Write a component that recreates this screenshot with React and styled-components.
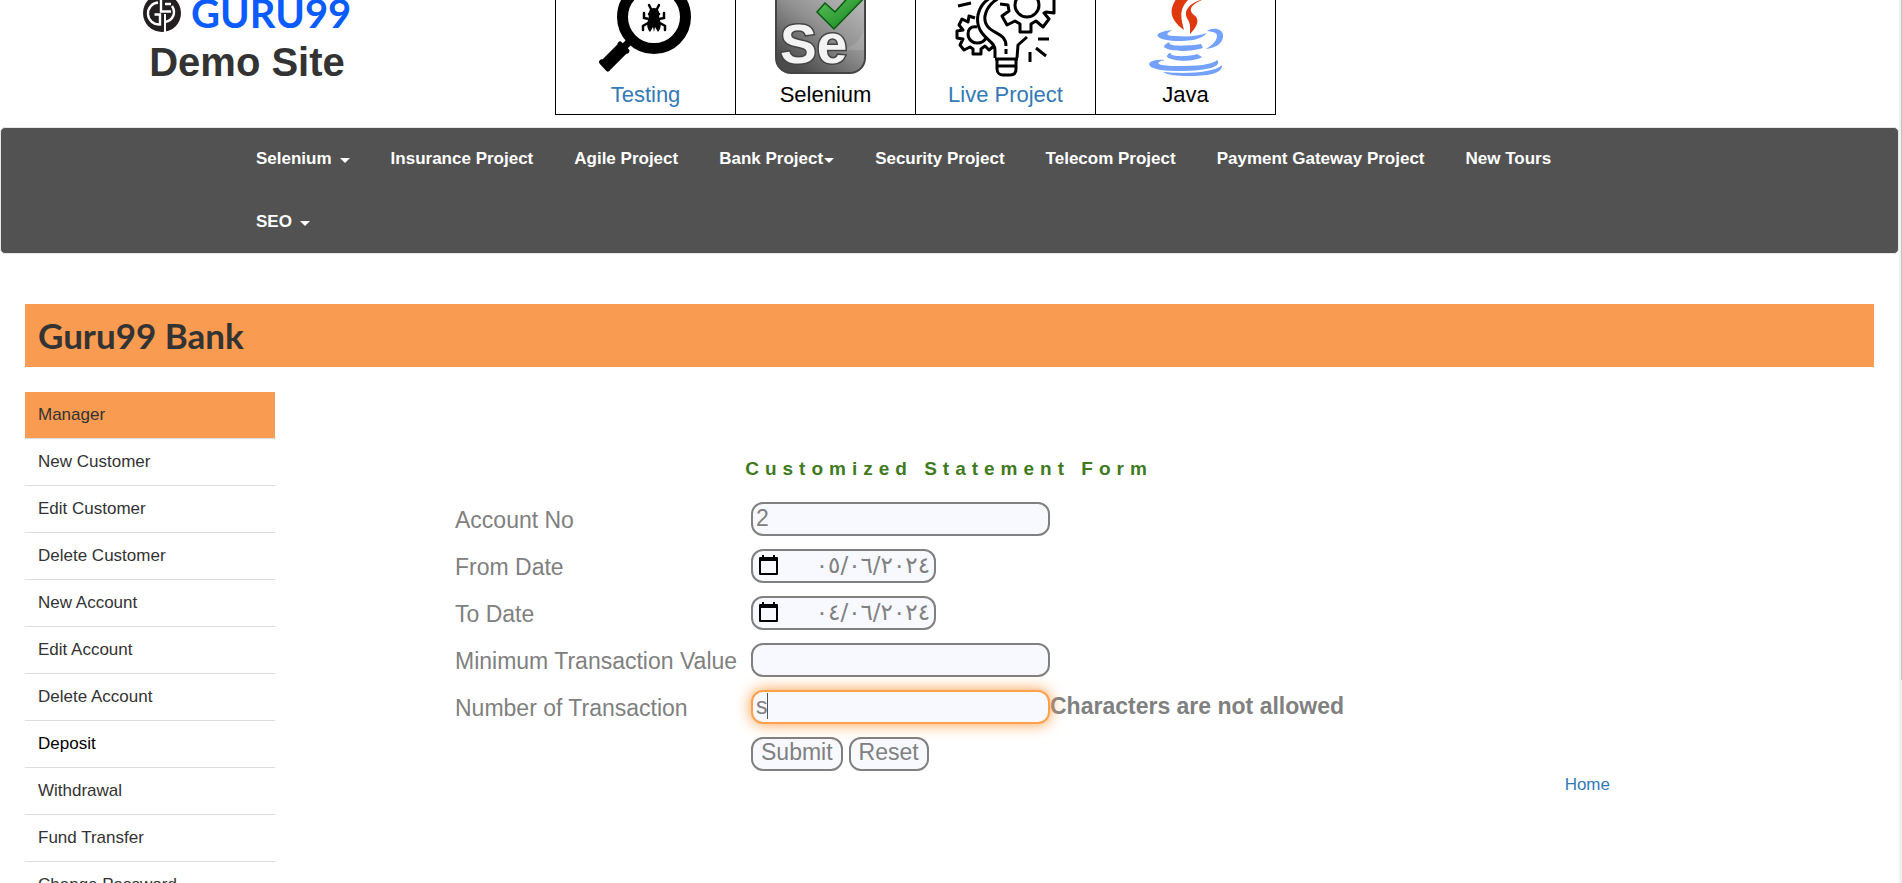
import React from "react";
import styled, { createGlobalStyle } from "styled-components";

const GlobalStyle = createGlobalStyle`
  * { box-sizing: border-box; }
  body {
    margin: 0;
    background: #fff;
    color: #333;
    font-family: "Liberation Sans", Arial, sans-serif;
    font-size: 17px;
    line-height: 24px;
  }
`;

const Window = styled.div`
  display: flex;
  height: 100vh;
  overflow: hidden;
`;

const Page = styled.div`
  flex: 1;
  min-width: 0;
  overflow: hidden;
`;

const ScrollTrack = styled.div`
  display: flex;
  justify-content: flex-end;
  flex: none;
  width: 3px;
  background: #f1f1f1;
`;

const ScrollThumb = styled.div`
  width: 1px;
  height: 77%;
  background: #c1c1c1;
`;

const Header = styled.header`
  display: flex;
  align-items: flex-start;
  height: 127px;
`;

const Brand = styled.div`
  flex: none;
  width: 415px;
  margin-left: 140px;
`;

const BrandLogo = styled.svg`
  display: block;
`;

const SiteTitle = styled.h1`
  margin: 0;
  width: 214px;
  color: #333;
  font-size: 40px;
  line-height: 54px;
  text-align: center;
`;

const Topics = styled.div`
  display: flex;
  border: solid #000;
  border-width: 0 0 1px 1px;
`;

const Topic = styled.div`
  width: 180px;
  padding-bottom: 2px;
  border-right: 1px solid #000;
  color: #000;
  font-size: 22px;
  line-height: 34px;
  text-align: center;
`;

const TopicArt = styled.svg`
  display: block;
  width: 179px;
  height: 78px;
`;

const Link = styled.a`
  color: #337ab7;
  text-decoration: none;
`;

const NavBar = styled.nav`
  border: 1px solid #e7e7e7;
  border-radius: 5px;
  background: #525252;
`;

const NavList = styled.ul`
  display: flex;
  flex-wrap: wrap;
  gap: 1px 41px;
  max-width: 1387px;
  margin: 0 auto;
  padding: 0;
  list-style: none;
`;

const NavLink = styled.a`
  display: flex;
  align-items: center;
  gap: ${(p) => (p.$tight ? "1px" : "8px")};
  height: 62px;
  color: #fff;
  font-weight: bold;
  text-decoration: none;
`;

const Caret = styled.span`
  border: solid transparent;
  border-width: 5px 5px 0;
  border-top-color: #fff;
  margin-top: 3px;
`;

const Banner = styled.h2`
  margin: 50px 25px 25px;
  padding: 0 13px;
  background: #f99b50;
  color: #333;
  font-family: Lato, "Liberation Sans", sans-serif;
  font-size: 35px;
  font-weight: 700;
  line-height: 63px;
`;

const Body = styled.div`
  display: flex;
  align-items: flex-start;
  padding: 0 25px;
`;

const Menu = styled.ul`
  flex: none;
  width: 250px;
  margin: 0;
  padding: 0;
  list-style: none;
`;

const MenuItem = styled.li`
  padding: 0 13px;
  border-bottom: 1px solid #ddd;
  background: ${(p) => (p.$active ? "#f99b50" : "transparent")};
  line-height: 46px;
`;

const MenuLink = styled.a`
  color: ${(p) => (p.$hover ? "#000" : "#333")};
  text-decoration: none;
`;

const Content = styled.main`
  flex: 1;
  max-width: 1335px;
  padding: 66px 0 0 180px;
`;

const FormTitle = styled.h3`
  max-width: 988px;
  margin: 0 0 15px;
  color: #3f7a1f;
  font-size: 19px;
  line-height: 22px;
  letter-spacing: 6px;
  text-align: center;
`;

const FormRow = styled.div`
  display: flex;
  align-items: center;
  height: 47px;
  color: #808080;
  font-size: 23px;
`;

const FieldLabel = styled.label`
  flex: none;
  width: 296px;
  padding-top: 2px;
`;

const Field = styled.input`
  width: 299px;
  height: 34px;
  padding: 0 3px 1px;
  border: 2px solid ${(p) => (p.$focused ? "#ffa04d" : "#808080")};
  border-radius: 12px;
  outline: none;
  background: #f8f8ff;
  box-shadow: ${(p) => (p.$focused ? "0 0 15px #ff9c45" : "none")};
  color: #808080;
  font: 23px "Liberation Sans", Arial, sans-serif;
`;

const DateBox = styled.span`
  display: flex;
  align-items: center;
  width: 185px;
  height: 34px;
  padding: 0 4px 2px 6px;
  border: 2px solid #808080;
  border-radius: 12px;
  background: #f8f8ff;
`;

const DateField = styled.input`
  flex: 1;
  min-width: 0;
  height: 28px;
  padding: 0;
  border: 0;
  outline: none;
  background: none;
  color: #808080;
  font: 23px "DejaVu Sans", sans-serif;
  text-align: right;
`;

const Caution = styled.strong`
  padding-bottom: 1px;
`;

const Cursor = styled.span`
  position: absolute;
  left: 16px;
  top: 3px;
  width: 1px;
  height: 26px;
  background: #555;
`;

const FocusWrap = styled.span`
  display: flex;
  position: relative;
`;

const Actions = styled.div`
  display: flex;
  gap: 6px;
  margin-left: 296px;
`;

const Button = styled.button`
  height: 34px;
  padding: 0 8px 2px;
  border: 2px solid #808080;
  border-radius: 12px;
  background: #f8f8ff;
  color: #808080;
  font: 23px "Liberation Sans", Arial, sans-serif;
`;

const HomeLine = styled.div`
  line-height: 16px;
  text-align: right;
`;

function GuruLogo() {
  return (
    <BrandLogo width="216" height="35" viewBox="140 0 216 35" role="img" aria-label="GURU99">
      <circle cx="162" cy="13" r="19" fill="#231f20" />
      <path d="M158 2.500A11 11 0 1 0 160 24.500V14.500H154.500" fill="none" stroke="#fff" strokeWidth="2.400" />
      <path d="M161 -2V11.500H171M165 4H171M165 22C174 20 176 12 172 6" fill="none" stroke="#fff" strokeWidth="2.400" />
      <path d="M165 14V32" stroke="#fff" strokeWidth="2" />
      <text x="191" y="28" fill="#0b5cff" fontFamily="Lato, sans-serif" fontSize="40" fontWeight="700">GURU99</text>
    </BrandLogo>
  );
}

function TestingArt() {
  return (
    <TopicArt viewBox="556 0 179 78" aria-hidden="true">
      <circle cx="654" cy="17" r="31.500" fill="none" stroke="#000" strokeWidth="11" />
      <path d="M632 39L620 51" stroke="#000" strokeWidth="7" />
      <path d="M624 47L606 65" stroke="#000" strokeWidth="13" />
      <path d="M620 44L627 51M601.500 62L608 69" stroke="#000" strokeWidth="5" strokeLinecap="round" />
      <path d="M654 8c5 0 6 5 5 10 3 5 2 11-1 14l-3-5-1 5-1-5-3 5c-3-3-4-9-1-14-1-5 0-10 5-10z" />
      <path d="M651 9l-2-4M657 9l2-4M649 19l-5-1v-5M659 19l5-1v-5M648 23l-5 3v4M660 23l5 3v4M649 14h10" fill="none" stroke="#000" strokeWidth="2.500" strokeLinecap="round" />
    </TopicArt>
  );
}

function SeleniumArt() {
  return (
    <TopicArt viewBox="736 0 179 78" aria-hidden="true">
      <defs>
        <linearGradient id="tile" x1="1" y1="0" x2="0.300" y2="1">
          <stop offset="0" stopColor="#c8c8c8" />
          <stop offset="0.550" stopColor="#929292" />
          <stop offset="1" stopColor="#4b4b4b" />
        </linearGradient>
        <linearGradient id="tick" x1="0" y1="0" x2="1" y2="1">
          <stop offset="0" stopColor="#63c663" />
          <stop offset="1" stopColor="#0a7d12" />
        </linearGradient>
      </defs>
      <rect x="776" y="-18" width="89" height="91" rx="15" fill="url(#tile)" stroke="#444" strokeWidth="2" />
      <path d="M864 -2V28C862 42 850 48 838 50L864 50V-2" fill="#fff" opacity=".12" />
      <text x="780" y="63" fill="#f3f3f3" stroke="#444" strokeWidth="3" paintOrder="stroke" fontFamily="Liberation Sans, sans-serif" fontSize="55" fontWeight="700">Se</text>
      <path d="M817 12L825 3L835 12L853 -8H870L834 29Z" fill="url(#tick)" stroke="#075b0d" strokeWidth="1.500" />
    </TopicArt>
  );
}

function ProjectArt() {
  return (
    <TopicArt viewBox="916 0 179 78" aria-hidden="true">
      <g fill="none" stroke="#000" strokeWidth="3" strokeLinejoin="round">
        <circle cx="1027" cy="5" r="12" />
        <path d="M1000 4L1008 5L1009 11L1002 16L1007 25L1015 21L1020 24V32H1031V24L1036 21L1043 27L1049 19L1044 13L1046 12L1054 13V-6" />
        <path d="M990 -2C977 6 974 22 982 33C988 41 995 43 995 50V58" />
        <path d="M999 -2C985 6 981 20 989 28C995 34 1006 34 1006 46" />
        <path d="M1006 49V54M1027 37L1018 45L1017 58" />
        <path d="M995 59H1018M997 59V69C997 73 1000 75 1003 75H1010C1014 75 1016 73 1016 69V59M997 66H1016" />
        <path d="M977 27C970 26 968 30 968 34C968 40 973 43 977 43C981 43 984 42 986 38" />
        <path d="M975 18L969 16L968 22L962 19L959 25L963 30L957 31V38L963 39L960 45L964 50L970 47L973 49V54H981V49L985 46L989 50L994 46" />
        <path d="M958 6L971 3M1038 39H1049M1036 48L1046 56M1030 52V62" />
      </g>
    </TopicArt>
  );
}

function JavaArt() {
  return (
    <TopicArt viewBox="1096 0 179 78" aria-hidden="true">
      <g fill="#e0380d">
        <path d="M1177 -2H1190C1181 7 1179 13 1184 30C1170 20 1168 10 1177 -2Z" />
        <path d="M1204 -1C1190 5 1188 10 1194 15C1201 20 1196 28 1190 34C1190 26 1191 25 1187 18C1183 11 1190 2 1204 -1Z" />
      </g>
      <g fill="#73a1fb">
        <path d="M1173 30C1166 33 1164 36 1176 36C1188 37 1198 36 1207 33C1201 40 1190 41 1176 41C1154 40 1150 32 1173 30Z" />
        <path d="M1207 31C1212 27 1224 28 1223 37C1222 45 1214 48 1206 49C1212 45 1217 41 1217 36C1217 32 1213 32 1207 31Z" />
        <path d="M1170 42C1165 47 1190 46 1201 44L1203 48C1190 52 1170 52 1164 47C1164 45 1166 43 1170 42Z" />
        <path d="M1171 53C1168 57 1190 57 1197 54L1202 57C1194 62 1174 62 1167 57C1167 55 1168 53 1171 53Z" />
        <path d="M1165 60C1155 62 1155 66 1176 66C1197 66 1212 65 1217 60C1222 65 1213 71 1177 71C1139 71 1145 58 1165 60Z" />
        <path d="M1163 72C1185 74 1214 73 1222 65C1223 74 1206 76 1188 76C1178 76 1167 75 1163 72Z" />
      </g>
    </TopicArt>
  );
}

function CalendarIcon() {
  return (
    <svg width="19" height="20" viewBox="0 0 19 20" aria-hidden="true">
      <path fillRule="evenodd" d="M3 0H5V2H14V0H16V2H18Q19 2 19 3V19Q19 20 18 20H1Q0 20 0 19V3Q0 2 1 2H3ZM2 6V18H17V6Z" fill="#000" />
    </svg>
  );
}

const topics = [
  { name: "Testing", Art: TestingArt, link: true },
  { name: "Selenium", Art: SeleniumArt },
  { name: "Live Project", Art: ProjectArt, link: true },
  { name: "Java", Art: JavaArt },
];

const navItems = [
  { name: "Selenium", caret: true },
  { name: "Insurance Project" },
  { name: "Agile Project" },
  { name: "Bank Project", caret: true, tight: true },
  { name: "Security Project" },
  { name: "Telecom Project" },
  { name: "Payment Gateway Project" },
  { name: "New Tours" },
  { name: "SEO", caret: true },
];

const menuItems = [
  "Manager",
  "New Customer",
  "Edit Customer",
  "Delete Customer",
  "New Account",
  "Edit Account",
  "Delete Account",
  "Deposit",
  "Withdrawal",
  "Fund Transfer",
  "Change Password",
];

function DateRow({ id, label, value }) {
  return (
    <FormRow>
      <FieldLabel htmlFor={id}>{label}</FieldLabel>
      <DateBox>
        <CalendarIcon />
        <DateField id={id} defaultValue={value} />
      </DateBox>
    </FormRow>
  );
}

export default function App() {
  return (
    <Window>
      <GlobalStyle />
      <Page>
        <Header>
          <Brand>
            <GuruLogo />
            <SiteTitle>Demo Site</SiteTitle>
          </Brand>
          <Topics>
            {topics.map(({ name, Art, link }) => (
              <Topic key={name}>
                <Art />
                {link ? <Link href="#">{name}</Link> : name}
              </Topic>
            ))}
          </Topics>
        </Header>
        <NavBar>
          <NavList>
            {navItems.map(({ name, caret, tight }) => (
              <li key={name}>
                <NavLink href="#" $tight={tight}>
                  {name}
                  {caret && <Caret />}
                </NavLink>
              </li>
            ))}
          </NavList>
        </NavBar>
        <Banner>Guru99 Bank</Banner>
        <Body>
          <Menu>
            {menuItems.map((name, i) => (
              <MenuItem key={name} $active={i === 0}>
                <MenuLink href="#" $hover={name === "Deposit"}>{name}</MenuLink>
              </MenuItem>
            ))}
          </Menu>
          <Content>
            <form onSubmit={(e) => e.preventDefault()}>
              <FormTitle>Customized Statement Form</FormTitle>
              <FormRow>
                <FieldLabel htmlFor="account">Account No</FieldLabel>
                <Field id="account" defaultValue="2" />
              </FormRow>
              <DateRow id="from" label="From Date" value="٠٥/٠٦/٢٠٢٤" />
              <DateRow id="to" label="To Date" value="٠٤/٠٦/٢٠٢٤" />
              <FormRow>
                <FieldLabel htmlFor="minimum">Minimum Transaction Value</FieldLabel>
                <Field id="minimum" />
              </FormRow>
              <FormRow>
                <FieldLabel htmlFor="count">Number of Transaction</FieldLabel>
                <FocusWrap>
                  <Field id="count" defaultValue="s" $focused />
                  <Cursor />
                </FocusWrap>
                <Caution>Characters are not allowed</Caution>
              </FormRow>
              <FormRow>
                <Actions>
                  <Button type="submit">Submit</Button>
                  <Button type="reset">Reset</Button>
                </Actions>
              </FormRow>
            </form>
            <HomeLine>
              <Link href="#">Home</Link>
            </HomeLine>
          </Content>
        </Body>
      </Page>
      <ScrollTrack>
        <ScrollThumb />
      </ScrollTrack>
    </Window>
  );
}
